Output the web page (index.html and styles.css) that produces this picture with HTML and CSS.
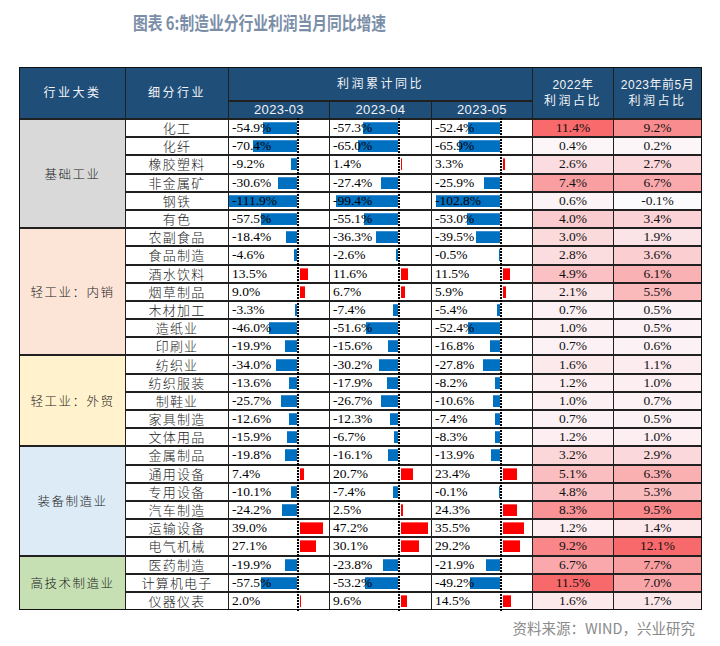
FILE: index.html
```html
<!DOCTYPE html>
<html lang="zh-CN">
<head>
<meta charset="utf-8">
<title>图表 6</title>
<link rel="stylesheet" href="styles.css">
</head>
<body>
<div class="page">
  <div class="title">图表 6:制造业分行业利润当月同比增速</div>
  <div class="table">
    <div class="h h-cat">行业大类</div>
    <div class="h h-sub">细分行业</div>
    <div class="h h-grp">利润累计同比</div>
    <div class="h h-d1 date">2023-03</div>
    <div class="h h-d2 date">2023-04</div>
    <div class="h h-d3 date">2023-05</div>
    <div class="h h-s1"><span class="l1">2022年</span><span>利润占比</span></div>
    <div class="h h-s2"><span class="l1">2023年前5月</span><span>利润占比</span></div>

    <div class="cat c1">基础工业</div>
    <div class="cat c2">轻工业：内销</div>
    <div class="cat c3">轻工业：外贸</div>
    <div class="cat c4">装备制造业</div>
    <div class="cat c5">高技术制造业</div>

    <!-- 1 -->
    <div class="sub">化工</div>
    <div class="d"><i class="bn" style="width:34px"></i><b class="ax"></b><span class="val">-54.9%</span></div>
    <div class="d"><i class="bn" style="width:35.5px"></i><b class="ax"></b><span class="val">-57.3%</span></div>
    <div class="d"><i class="bn" style="width:32.5px"></i><b class="ax"></b><span class="val">-52.4%</span></div>
    <div class="hm" style="background:#f86a6c">11.4%</div>
    <div class="hm" style="background:#f98c8e">9.2%</div>
    <!-- 2 -->
    <div class="sub">化纤</div>
    <div class="d"><i class="bn" style="width:43.6px"></i><b class="ax"></b><span class="val">-70.4%</span></div>
    <div class="d"><i class="bn" style="width:40.3px"></i><b class="ax"></b><span class="val">-65.0%</span></div>
    <div class="d"><i class="bn" style="width:40.9px"></i><b class="ax"></b><span class="val">-65.9%</span></div>
    <div class="hm" style="background:#fcf6f8">0.4%</div>
    <div class="hm" style="background:#fcf6f8">0.2%</div>
    <!-- 3 -->
    <div class="sub">橡胶塑料</div>
    <div class="d"><i class="bn" style="width:5.7px"></i><b class="ax"></b><span class="val">-9.2%</span></div>
    <div class="d"><i class="bp" style="width:1px"></i><b class="ax"></b><span class="val">1.4%</span></div>
    <div class="d"><i class="bp" style="width:1.9px"></i><b class="ax"></b><span class="val">3.3%</span></div>
    <div class="hm" style="background:#fbdce0">2.6%</div>
    <div class="hm" style="background:#fbd8db">2.7%</div>
    <!-- 4 -->
    <div class="sub">非金属矿</div>
    <div class="d"><i class="bn" style="width:19px"></i><b class="ax"></b><span class="val">-30.6%</span></div>
    <div class="d"><i class="bn" style="width:17px"></i><b class="ax"></b><span class="val">-27.4%</span></div>
    <div class="d"><i class="bn" style="width:16.1px"></i><b class="ax"></b><span class="val">-25.9%</span></div>
    <div class="hm" style="background:#f99fa2">7.4%</div>
    <div class="hm" style="background:#faaaad">6.7%</div>
    <!-- 5 -->
    <div class="sub">钢铁</div>
    <div class="d"><i class="bn" style="width:68px"></i><b class="ax"></b><span class="val">-111.9%</span></div>
    <div class="d"><i class="bn" style="width:61.6px"></i><b class="ax"></b><span class="val">-99.4%</span></div>
    <div class="d"><i class="bn" style="width:63.7px"></i><b class="ax"></b><span class="val">-102.8%</span></div>
    <div class="hm" style="background:#fcf3f6">0.6%</div>
    <div class="hm" style="background:#fbfbfd">-0.1%</div>
    <!-- 6 -->
    <div class="sub">有色</div>
    <div class="d"><i class="bn" style="width:35.7px"></i><b class="ax"></b><span class="val">-57.5%</span></div>
    <div class="d"><i class="bn" style="width:34.2px"></i><b class="ax"></b><span class="val">-55.1%</span></div>
    <div class="d"><i class="bn" style="width:32.9px"></i><b class="ax"></b><span class="val">-53.0%</span></div>
    <div class="hm" style="background:#fbcccf">4.0%</div>
    <div class="hm" style="background:#fbd2d5">3.4%</div>
    <!-- 7 -->
    <div class="sub">农副食品</div>
    <div class="d"><i class="bn" style="width:11.4px"></i><b class="ax"></b><span class="val">-18.4%</span></div>
    <div class="d"><i class="bn" style="width:22.5px"></i><b class="ax"></b><span class="val">-36.3%</span></div>
    <div class="d"><i class="bn" style="width:24.5px"></i><b class="ax"></b><span class="val">-39.5%</span></div>
    <div class="hm" style="background:#fbdadc">3.0%</div>
    <div class="hm" style="background:#fbe4e7">1.9%</div>
    <!-- 8 -->
    <div class="sub">食品制造</div>
    <div class="d"><i class="bn" style="width:2.9px"></i><b class="ax"></b><span class="val">-4.6%</span></div>
    <div class="d"><i class="bn" style="width:1.6px"></i><b class="ax"></b><span class="val">-2.6%</span></div>
    <div class="d"><i class="bn" style="width:1px"></i><b class="ax"></b><span class="val">-0.5%</span></div>
    <div class="hm" style="background:#fbdcdf">2.8%</div>
    <div class="hm" style="background:#fbcfd2">3.6%</div>
    <!-- 9 -->
    <div class="sub">酒水饮料</div>
    <div class="d"><i class="bp" style="width:7.8px"></i><b class="ax"></b><span class="val">13.5%</span></div>
    <div class="d"><i class="bp" style="width:6.7px"></i><b class="ax"></b><span class="val">11.6%</span></div>
    <div class="d"><i class="bp" style="width:6.7px"></i><b class="ax"></b><span class="val">11.5%</span></div>
    <div class="hm" style="background:#fac0c3">4.9%</div>
    <div class="hm" style="background:#fab1b4">6.1%</div>
    <!-- 10 -->
    <div class="sub">烟草制品</div>
    <div class="d"><i class="bp" style="width:5.2px"></i><b class="ax"></b><span class="val">9.0%</span></div>
    <div class="d"><i class="bp" style="width:3.9px"></i><b class="ax"></b><span class="val">6.7%</span></div>
    <div class="d"><i class="bp" style="width:3.4px"></i><b class="ax"></b><span class="val">5.9%</span></div>
    <div class="hm" style="background:#fbe6e8">2.1%</div>
    <div class="hm" style="background:#fab9bb">5.5%</div>
    <!-- 11 -->
    <div class="sub">木材加工</div>
    <div class="d"><i class="bn" style="width:2px"></i><b class="ax"></b><span class="val">-3.3%</span></div>
    <div class="d"><i class="bn" style="width:4.6px"></i><b class="ax"></b><span class="val">-7.4%</span></div>
    <div class="d"><i class="bn" style="width:3.3px"></i><b class="ax"></b><span class="val">-5.4%</span></div>
    <div class="hm" style="background:#fcf2f5">0.7%</div>
    <div class="hm" style="background:#fcf2f5">0.5%</div>
    <!-- 12 -->
    <div class="sub">造纸业</div>
    <div class="d"><i class="bn" style="width:28.5px"></i><b class="ax"></b><span class="val">-46.0%</span></div>
    <div class="d"><i class="bn" style="width:32px"></i><b class="ax"></b><span class="val">-51.6%</span></div>
    <div class="d"><i class="bn" style="width:32.5px"></i><b class="ax"></b><span class="val">-52.4%</span></div>
    <div class="hm" style="background:#fcf0f3">1.0%</div>
    <div class="hm" style="background:#fcf2f5">0.5%</div>
    <!-- 13 -->
    <div class="sub">印刷业</div>
    <div class="d"><i class="bn" style="width:12.3px"></i><b class="ax"></b><span class="val">-19.9%</span></div>
    <div class="d"><i class="bn" style="width:9.7px"></i><b class="ax"></b><span class="val">-15.6%</span></div>
    <div class="d"><i class="bn" style="width:10.4px"></i><b class="ax"></b><span class="val">-16.8%</span></div>
    <div class="hm" style="background:#fcf2f5">0.7%</div>
    <div class="hm" style="background:#fcf1f4">0.6%</div>
    <!-- 14 -->
    <div class="sub">纺织业</div>
    <div class="d"><i class="bn" style="width:21.1px"></i><b class="ax"></b><span class="val">-34.0%</span></div>
    <div class="d"><i class="bn" style="width:18.7px"></i><b class="ax"></b><span class="val">-30.2%</span></div>
    <div class="d"><i class="bn" style="width:17.2px"></i><b class="ax"></b><span class="val">-27.8%</span></div>
    <div class="hm" style="background:#fce9ec">1.6%</div>
    <div class="hm" style="background:#fcecef">1.1%</div>
    <!-- 15 -->
    <div class="sub">纺织服装</div>
    <div class="d"><i class="bn" style="width:8.4px"></i><b class="ax"></b><span class="val">-13.6%</span></div>
    <div class="d"><i class="bn" style="width:11.1px"></i><b class="ax"></b><span class="val">-17.9%</span></div>
    <div class="d"><i class="bn" style="width:5.1px"></i><b class="ax"></b><span class="val">-8.2%</span></div>
    <div class="hm" style="background:#fceef1">1.2%</div>
    <div class="hm" style="background:#fceef1">1.0%</div>
    <!-- 16 -->
    <div class="sub">制鞋业</div>
    <div class="d"><i class="bn" style="width:15.9px"></i><b class="ax"></b><span class="val">-25.7%</span></div>
    <div class="d"><i class="bn" style="width:16.6px"></i><b class="ax"></b><span class="val">-26.7%</span></div>
    <div class="d"><i class="bn" style="width:6.6px"></i><b class="ax"></b><span class="val">-10.6%</span></div>
    <div class="hm" style="background:#fcf0f3">1.0%</div>
    <div class="hm" style="background:#fcf1f4">0.7%</div>
    <!-- 17 -->
    <div class="sub">家具制造</div>
    <div class="d"><i class="bn" style="width:7.8px"></i><b class="ax"></b><span class="val">-12.6%</span></div>
    <div class="d"><i class="bn" style="width:7.6px"></i><b class="ax"></b><span class="val">-12.3%</span></div>
    <div class="d"><i class="bn" style="width:4.6px"></i><b class="ax"></b><span class="val">-7.4%</span></div>
    <div class="hm" style="background:#fcf2f5">0.7%</div>
    <div class="hm" style="background:#fcf2f5">0.5%</div>
    <!-- 18 -->
    <div class="sub">文体用品</div>
    <div class="d"><i class="bn" style="width:9.9px"></i><b class="ax"></b><span class="val">-15.9%</span></div>
    <div class="d"><i class="bn" style="width:4.2px"></i><b class="ax"></b><span class="val">-6.7%</span></div>
    <div class="d"><i class="bn" style="width:5.1px"></i><b class="ax"></b><span class="val">-8.3%</span></div>
    <div class="hm" style="background:#fceef1">1.2%</div>
    <div class="hm" style="background:#fceef1">1.0%</div>
    <!-- 19 -->
    <div class="sub">金属制品</div>
    <div class="d"><i class="bn" style="width:12.3px"></i><b class="ax"></b><span class="val">-19.8%</span></div>
    <div class="d"><i class="bn" style="width:10px"></i><b class="ax"></b><span class="val">-16.1%</span></div>
    <div class="d"><i class="bn" style="width:8.6px"></i><b class="ax"></b><span class="val">-13.9%</span></div>
    <div class="hm" style="background:#fbd7da">3.2%</div>
    <div class="hm" style="background:#fbd8db">2.9%</div>
    <!-- 20 -->
    <div class="sub">通用设备</div>
    <div class="d"><i class="bp" style="width:4.3px"></i><b class="ax"></b><span class="val">7.4%</span></div>
    <div class="d"><i class="bp" style="width:12px"></i><b class="ax"></b><span class="val">20.7%</span></div>
    <div class="d"><i class="bp" style="width:13.6px"></i><b class="ax"></b><span class="val">23.4%</span></div>
    <div class="hm" style="background:#fabec0">5.1%</div>
    <div class="hm" style="background:#faafb1">6.3%</div>
    <!-- 21 -->
    <div class="sub">专用设备</div>
    <div class="d"><i class="bn" style="width:6.3px"></i><b class="ax"></b><span class="val">-10.1%</span></div>
    <div class="d"><i class="bn" style="width:4.6px"></i><b class="ax"></b><span class="val">-7.4%</span></div>
    <div class="d"><i class="bn" style="width:1px"></i><b class="ax"></b><span class="val">-0.1%</span></div>
    <div class="hm" style="background:#fac2c4">4.8%</div>
    <div class="hm" style="background:#fabbbd">5.3%</div>
    <!-- 22 -->
    <div class="sub">汽车制造</div>
    <div class="d"><i class="bn" style="width:15px"></i><b class="ax"></b><span class="val">-24.2%</span></div>
    <div class="d"><i class="bp" style="width:1.5px"></i><b class="ax"></b><span class="val">2.5%</span></div>
    <div class="d"><i class="bp" style="width:14.1px"></i><b class="ax"></b><span class="val">24.3%</span></div>
    <div class="hm" style="background:#f99396">8.3%</div>
    <div class="hm" style="background:#f9888b">9.5%</div>
    <!-- 23 -->
    <div class="sub">运输设备</div>
    <div class="d"><i class="bp" style="width:22.6px"></i><b class="ax"></b><span class="val">39.0%</span></div>
    <div class="d"><i class="bp" style="width:27.4px"></i><b class="ax"></b><span class="val">47.2%</span></div>
    <div class="d"><i class="bp" style="width:20.6px"></i><b class="ax"></b><span class="val">35.5%</span></div>
    <div class="hm" style="background:#fceef1">1.2%</div>
    <div class="hm" style="background:#fce8eb">1.4%</div>
    <!-- 24 -->
    <div class="sub">电气机械</div>
    <div class="d"><i class="bp" style="width:15.7px"></i><b class="ax"></b><span class="val">27.1%</span></div>
    <div class="d"><i class="bp" style="width:17.5px"></i><b class="ax"></b><span class="val">30.1%</span></div>
    <div class="d"><i class="bp" style="width:16.9px"></i><b class="ax"></b><span class="val">29.2%</span></div>
    <div class="hm" style="background:#f9878a">9.2%</div>
    <div class="hm" style="background:#f8696b">12.1%</div>
    <!-- 25 -->
    <div class="sub">医药制造</div>
    <div class="d"><i class="bn" style="width:12.3px"></i><b class="ax"></b><span class="val">-19.9%</span></div>
    <div class="d"><i class="bn" style="width:14.8px"></i><b class="ax"></b><span class="val">-23.8%</span></div>
    <div class="d"><i class="bn" style="width:13.6px"></i><b class="ax"></b><span class="val">-21.9%</span></div>
    <div class="hm" style="background:#faa8ab">6.7%</div>
    <div class="hm" style="background:#f99ea0">7.7%</div>
    <!-- 26 -->
    <div class="sub">计算机电子</div>
    <div class="d"><i class="bn" style="width:35.7px"></i><b class="ax"></b><span class="val">-57.5%</span></div>
    <div class="d"><i class="bn" style="width:33px"></i><b class="ax"></b><span class="val">-53.2%</span></div>
    <div class="d"><i class="bn" style="width:30.5px"></i><b class="ax"></b><span class="val">-49.2%</span></div>
    <div class="hm" style="background:#f8696b">11.5%</div>
    <div class="hm" style="background:#faa6a9">7.0%</div>
    <!-- 27 -->
    <div class="sub">仪器仪表</div>
    <div class="d"><i class="bp" style="width:1.2px"></i><b class="ax"></b><span class="val">2.0%</span></div>
    <div class="d"><i class="bp" style="width:5.6px"></i><b class="ax"></b><span class="val">9.6%</span></div>
    <div class="d"><i class="bp" style="width:8.4px"></i><b class="ax"></b><span class="val">14.5%</span></div>
    <div class="hm" style="background:#fce9ec">1.6%</div>
    <div class="hm" style="background:#fbe6e9">1.7%</div>
  </div>
  <div class="src">资料来源：WIND，兴业研究</div>
</div>
</body>
</html>
```

FILE: styles.css
```css
html, body {
  margin: 0;
  padding: 0;
  background: #ffffff;
}

body {
  width: 720px;
  height: 646px;
  overflow: hidden;
  font-family: "Liberation Serif", "Noto Sans CJK SC", serif;
  color: #000;
}

.page {
  padding-left: 19px;
}

.title {
  height: 44px;
  display: flex;
  align-items: center;
  margin-left: 114px;
  font-family: "Noto Sans CJK SC", sans-serif;
  font-weight: 700;
  font-size: 18px;
  color: #7b8ea8;
  white-space: nowrap;
  transform: scaleX(0.82);
  transform-origin: left center;
}

.table {
  margin-top: 23px;
  display: grid;
  box-sizing: border-box;
  width: 683px;
  border: 1px solid #111;
  background: #202020;
  gap: 2px 1px;
  grid-template-columns: 105px 102px 100px 101px 100px 80px 87px;
  grid-template-rows: 32px 16px repeat(27, 16.2px);
}

/* header */
.h {
  background: #1f4e79;
  color: #f2f4f7;
  display: flex;
  flex-direction: column;
  align-items: center;
  justify-content: center;
  font-family: "Liberation Sans", "Noto Sans CJK SC", sans-serif;
  font-size: 12px;
  line-height: 16px;
  letter-spacing: 2.5px;
}
.h .l1 { letter-spacing: 0.5px; }
.h-cat { grid-column: 1; grid-row: 1 / span 2; }
.h-sub { grid-column: 2; grid-row: 1 / span 2; }
.h-grp { grid-column: 3 / span 3; grid-row: 1; }
.h-d1 { grid-column: 3; grid-row: 2; }
.h-d2 { grid-column: 4; grid-row: 2; }
.h-d3 { grid-column: 5; grid-row: 2; }
.h-s1 { grid-column: 6; grid-row: 1 / span 2; }
.h-s2 { grid-column: 7; grid-row: 1 / span 2; }
.date {
  font-size: 13px;
  letter-spacing: 0.3px;
}

/* category column */
.cat {
  grid-column: 1;
  display: flex;
  align-items: center;
  justify-content: center;
  font-family: "Noto Sans CJK SC", sans-serif;
  font-weight: 300;
  font-size: 12.5px;
  line-height: 16px;
  letter-spacing: 1.5px;
  color: #1a1a1a;
}
.c1 { grid-row: 3 / span 6; background: #d9d9d9; }
.c2 { grid-row: 9 / span 7; background: #fce4d6; }
.c3 { grid-row: 16 / span 5; background: #fff2cc; }
.c4 { grid-row: 21 / span 6; background: #ddebf7; }
.c5 { grid-row: 27 / span 3; background: #c6e0b4; }

/* sub-industry */
.sub {
  background: #fff;
  display: flex;
  align-items: center;
  justify-content: center;
  font-family: "Noto Sans CJK SC", sans-serif;
  font-weight: 300;
  font-size: 13px;
  line-height: 16px;
  letter-spacing: 1.2px;
  color: #1a1a1a;
}

/* data bar cells */
.d {
  background: #fff;
  display: grid;
  grid-template-columns: 68px 2px 1fr;
  grid-template-rows: 100%;
}
.ax {
  grid-column: 2;
  grid-row: 1;
  margin: -2px 0;
  background: repeating-linear-gradient(to bottom, #000 0 2px, #fff 2px 3px);
}
.bn, .bp {
  grid-row: 1;
  align-self: center;
  height: 12px;
  box-sizing: border-box;
}
.bn {
  grid-column: 1;
  justify-self: end;
  background: #0070c0;
  border-top: 1px solid #3b8fd0;
}
.bp {
  grid-column: 3;
  justify-self: start;
  margin-left: 1px;
  background: #ff0000;
  border-top: 1px solid #ff5a5a;
}
.val {
  grid-column: 1 / -1;
  grid-row: 1;
  align-self: center;
  padding-left: 3px;
  font-family: "Liberation Serif", serif;
  font-size: 13.5px;
  line-height: 16px;
  color: #000;
}

/* heatmap cells */
.hm {
  display: flex;
  align-items: center;
  justify-content: center;
  font-family: "Liberation Serif", serif;
  font-size: 13.5px;
  color: #111;
}

.src {
  width: 676px;
  margin-top: 9px;
  text-align: right;
  font-family: "Noto Sans CJK SC", sans-serif;
  font-size: 14.5px;
  line-height: 18px;
  color: #8a8a8a;
}
```
